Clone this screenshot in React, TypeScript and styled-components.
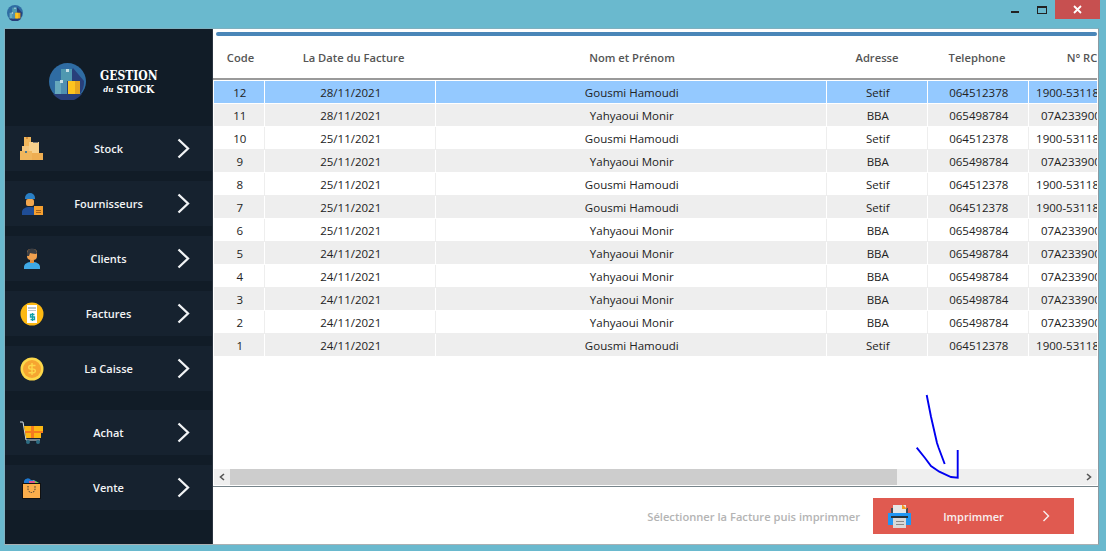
import React from "react";
import styled, { createGlobalStyle } from "styled-components";

const Global = createGlobalStyle`
  html, body { margin: 0; padding: 0; background: #6ab9ce; }
  body { font-family: "Open Sans", "Noto Sans", sans-serif; overflow: hidden; }
  * { box-sizing: border-box; }
`;

const Win = styled.div`
  position: relative;
  width: 1106px;
  height: 551px;
  background: #6ab9ce;
  display: flex;
  flex-direction: column;
  overflow: hidden;
`;
const TitleBar = styled.div`
  height: 28px;
  flex: none;
  display: flex;
  align-items: flex-start;
  padding: 5px 6px 0 7px;
`;
const Controls = styled.div`
  margin-left: auto;
  margin-top: -5px;
  display: flex;
  align-items: flex-start;
`;
const Ctl = styled.div<{ $w: number }>`
  width: ${(p) => p.$w}px;
  height: 19px;
  display: flex;
  align-items: center;
  justify-content: center;
`;
const CloseCtl = styled(Ctl)`
  background: #c75050;
`;
const Body = styled.div`
  flex: 1;
  display: flex;
  margin: 0 7px 6px 4px;
  border: 1px solid #7fb0bf;
  border-right-color: #8a9aa2;
  border-bottom-color: #a9b0b3;
  min-height: 0;
`;
const Sidebar = styled.nav`
  width: 208px;
  flex: none;
  background: #111c27;
  display: flex;
  flex-direction: column;
  border-right: 1px solid #2a3440;
`;
const Brand = styled.div`
  height: 97px;
  flex: none;
  display: flex;
  align-items: center;
  padding: 8px 0 0 44px;
  gap: 14px;
`;
const BrandText = styled.div`
  display: flex;
  flex-direction: column;
  align-items: center;
  color: #fff;
  font-family: "DejaVu Serif Condensed", "DejaVu Serif", "Liberation Serif", serif;
  font-stretch: condensed;
  font-weight: 700;
  line-height: 12.5px;
  margin-top: 2px;
`;
const BrandMain = styled.span`
  font-size: 12px;
  white-space: nowrap;
`;
const BrandStock = styled.span`
  font-size: 10.5px;
  white-space: nowrap;
  display: flex;
  align-items: center;
  gap: 3px;
`;
const BrandDu = styled.span`
  font-size: 8px;
  font-style: italic;
`;
const NavGroup = styled.div<{ $mt?: number }>`
  display: flex;
  flex-direction: column;
  gap: 10px;
  margin-top: ${(p) => p.$mt ?? 0}px;
`;
const NavRow = styled.div`
  height: 45px;
  background: #16222f;
  display: grid;
  grid-template-columns: 1fr auto 1fr;
  align-items: center;
  padding: 0 15px;
  color: #f2f4f5;
  font-size: 11px;
  font-weight: 600;
`;
const NavIcon = styled.svg`
  width: 24px;
  height: 24px;
  display: block;
`;
const Chevron = styled.svg`
  justify-self: end;
  margin-right: 7px;
  width: 13px;
  height: 21px;
  display: block;
`;
const Main = styled.main`
  flex: 1;
  min-width: 0;
  background: #fff;
  display: flex;
  flex-direction: column;
`;
const TopBar = styled.div`
  height: 4px;
  flex: none;
  margin: 3px 1px 0 3px;
  background: #4a86b8;
  border-radius: 2px;
`;
const Table = styled.div`
  flex: 1;
  min-height: 0;
  overflow: hidden;
  display: flex;
  flex-direction: column;
  padding-right: 1px;
`;
const Head = styled.div`
  height: 44px;
  flex: none;
  border-bottom: 2px solid #9a9a9a;
  display: grid;
  grid-template-columns: 53px 173px 384px 106px 94px 116px;
  padding-left: 1px;
  overflow: hidden;
`;
const HeadCell = styled.div`
  display: flex;
  align-items: center;
  justify-content: center;
  white-space: nowrap;
  font-size: 11.2px;
  font-weight: 600;
  color: #555;
`;
const Rows = styled.div`
  flex: 1;
  padding-top: 1px;
  min-height: 0;
`;
const Row = styled.div<{ $bg: string; $line: string }>`
  height: 23px;
  display: grid;
  grid-template-columns: 51px 171px 391px 101px 101px 110px;
  margin-left: 1px;
  overflow: hidden;
  background: ${(p) => p.$bg};
  color: #222;
  font-size: 11.5px;
  & > div { border-right: 1px solid ${(p) => p.$line}; border-bottom: 1px solid ${(p) => p.$line}; }
`;
const Cell = styled.div`
  display: flex;
  align-items: center;
  justify-content: center;
  white-space: nowrap;
  overflow: visible;
  padding-left: 1.5px;
  &:last-child { border-right: 0; padding-left: 0; }
`;
const HBar = styled.div`
  height: 16px;
  flex: none;
  margin: 0 1px 1px 1px;
  background: #efefef;
  display: flex;
  align-items: stretch;
`;
const HBtn = styled.div`
  width: 16px;
  flex: none;
  display: flex;
  align-items: center;
  justify-content: center;
`;
const HTrack = styled.div`
  flex: 1;
  display: flex;
`;
const HThumb = styled.div`
  width: 667px;
  background: #cdcdcd;
`;
const Footer = styled.footer`
  height: 58px;
  flex: none;
  border-top: 1px solid #77848a;
  display: flex;
  align-items: center;
  justify-content: flex-end;
  padding: 1px 24px 0 0;
  gap: 13px;
`;
const Hint = styled.span`
  color: #b4b4b4;
  font-size: 11.15px;
  font-weight: 600;
  white-space: nowrap;
`;
const PrintBtn = styled.button`
  width: 201px;
  height: 36px;
  border: 0;
  padding: 0 24px 0 15px;
  background: #e05a50;
  color: #f8f0ef;
  display: grid;
  grid-template-columns: 24px 1fr 8px;
  align-items: center;
  font-family: inherit;
  font-size: 11px;
  font-weight: 600;
`;
const PrintLabel = styled.span`
  padding-right: 7px;
`;
const Scribble = styled.svg`
  position: absolute;
  left: 910px;
  top: 390px;
  width: 55px;
  height: 95px;
  pointer-events: none;
`;

const data: [number, string, string, string, string, string][] = [];
const g = "Gousmi Hamoudi", y = "Yahyaoui Monir";
const rowsSrc: [number, string, boolean][] = [
  [12, "28/11/2021", true], [11, "28/11/2021", false], [10, "25/11/2021", true],
  [9, "25/11/2021", false], [8, "25/11/2021", true], [7, "25/11/2021", true],
  [6, "25/11/2021", false], [5, "24/11/2021", false], [4, "24/11/2021", false],
  [3, "24/11/2021", false], [2, "24/11/2021", false], [1, "24/11/2021", true],
];
rowsSrc.forEach(([c, d, isG]) =>
  data.push(isG
    ? [c, d, g, "Setif", "064512378", "1900-5311800000"]
    : [c, d, y, "BBA", "065498784", "07A2339000000"])
);

const StockIcon = () => (
  <NavIcon viewBox="0 0 24 24">
    <rect x="4" y="0" width="7" height="9" fill="#f0b65c" />
    <rect x="9" y="5" width="10" height="11" fill="#f6d08c" />
    <rect x="2" y="9" width="7" height="7" fill="#f3c67e" />
    <rect x="0" y="14" width="12" height="9" fill="#f0b65c" />
    <rect x="12" y="16" width="11" height="7" fill="#eeae52" />
    <rect x="6" y="0" width="2" height="2" fill="#d98f3a" />
    <rect x="5" y="14" width="2" height="2" fill="#4d7a90" />
    <rect x="13" y="5" width="5" height="1" fill="#777" />
  </NavIcon>
);
const WorkerIcon = () => (
  <NavIcon viewBox="0 0 24 24">
    <path d="M5 6a5 5 0 0 1 10 0v1H5z" fill="#2a7fc4" />
    <rect x="6" y="7" width="8" height="7" rx="2" fill="#f2a64e" />
    <path d="M2 23v-3c0-3 3-5 8-5s6 1 7 2v6z" fill="#1f4d96" />
    <rect x="14" y="14" width="9" height="9" fill="#f5a030" />
    <rect x="16" y="18" width="5" height="1" fill="#a5611a" />
    <rect x="16" y="20" width="5" height="1" fill="#a5611a" />
  </NavIcon>
);
const ClientIcon = () => (
  <NavIcon viewBox="0 0 24 24">
    <rect x="7" y="2" width="10" height="11" rx="4" fill="#f0a04e" />
    <path d="M7 7a5 5 0 0 1 10-1l-1 1c-3 0-5-1-6-1l-1 3H7z" fill="#3a3d42" />
    <path d="M4 22v-2c0-3 3-5 8-5s8 2 8 5v2z" fill="#3fa9e6" />
    <rect x="10" y="13" width="4" height="3" fill="#e08d3c" />
  </NavIcon>
);
const InvoiceIcon = () => (
  <NavIcon viewBox="0 0 24 24">
    <circle cx="12" cy="12" r="11.5" fill="#fdb913" />
    <rect x="7" y="3" width="10" height="18" fill="#fff" />
    <rect x="8" y="5" width="8" height="2" fill="#bcc6cc" />
    <rect x="8" y="8" width="8" height="1" fill="#bcc6cc" />
    <path d="M14.5 12.5h-4v2.5h4v2.5h-4M12.5 11v8" stroke="#11a0a8" strokeWidth="1.3" fill="none" />
  </NavIcon>
);
const CoinIcon = () => (
  <NavIcon viewBox="0 0 24 24">
    <circle cx="12" cy="12" r="11.5" fill="#fdd84a" />
    <circle cx="12" cy="12" r="9" fill="#f6a531" />
    <path d="M15.5 8.5H10.5a1.8 1.8 0 0 0 0 3.6h3a1.8 1.8 0 0 1 0 3.6H8.5M12 6v12" stroke="#fdd84a" strokeWidth="1.4" fill="none" />
  </NavIcon>
);
const CartIcon = () => (
  <NavIcon viewBox="0 0 24 24">
    <path d="M0 1h3l3 18h14" stroke="#d7e0e4" strokeWidth="1" fill="none" />
    <path d="M4 5h19v6l-2 1v5H6z" fill="#fdb913" />
    <rect x="11" y="5" width="3" height="12" fill="#f57c1f" />
    <rect x="5" y="10" width="18" height="2" fill="#f57c1f" />
    <circle cx="8" cy="21" r="2" fill="#2d6d84" />
    <circle cx="18" cy="21" r="2" fill="#2d6d84" />
  </NavIcon>
);
const BagIcon = () => (
  <NavIcon viewBox="0 0 24 24">
    <path d="M4 5a4 4 0 0 1 7-1l3 0 5 3v2H4z" fill="#1e78d0" />
    <path d="M13 4l6 3v2h-6z" fill="#8cc63f" />
    <rect x="9" y="5" width="6" height="3" fill="#e0558a" />
    <rect x="2.5" y="7.5" width="18" height="15" fill="#fbae4c" stroke="#111" strokeWidth="1" />
    <path d="M8 10v3a3.5 3.5 0 0 0 7 0v-3" fill="none" stroke="#333" strokeWidth="1" strokeDasharray="1.5 1" />
  </NavIcon>
);
const Chev = () => (
  <Chevron viewBox="0 0 13 21">
    <path d="M1.5 1.5 11 10.5 1.5 19.5" fill="none" stroke="#f2f4f5" strokeWidth="2.3" />
  </Chevron>
);

const nav1 = [
  ["Stock", StockIcon], ["Fournisseurs", WorkerIcon], ["Clients", ClientIcon],
  ["Factures", InvoiceIcon], ["La Caisse", CoinIcon],
] as const;
const nav2 = [["Achat", CartIcon], ["Vente", BagIcon]] as const;

const Nav = ({ label, Icon }: { label: string; Icon: React.FC }) => (
  <NavRow>
    <Icon />
    <span>{label}</span>
    <Chev />
  </NavRow>
);

const Logo = ({ size }: { size: number }) => (
  <svg width={size} height={size} viewBox="0 0 37 37" style={{ display: "block", flex: "none" }}>
    <circle cx="18.5" cy="18.5" r="18.5" fill="#2f6ca3" />
    <path d="M24 5 35 18a18.5 18.5 0 0 1-5 14H8l3-5z" fill="#283f7a" />
    <path d="M4 31a18.5 18.5 0 0 0 29 0z" fill="#283f7a" />
    <rect x="12" y="6" width="11" height="12" fill="#4f98b0" />
    <rect x="17" y="6" width="3" height="3" fill="#c5dfe6" />
    <rect x="6" y="18" width="12" height="13" fill="#67a9bd" />
    <rect x="12" y="18" width="6" height="13" fill="#4f8fb0" />
    <rect x="11" y="17" width="3" height="3" fill="#c5dfe6" />
    <rect x="19" y="18" width="12" height="13" fill="#e5a520" />
    <rect x="19" y="18" width="7" height="13" fill="#fdc41f" />
  </svg>
);

export default function App() {
  return (
    <Win>
      <Global />
      <TitleBar>
        <Logo size={16} />
        <Controls>
          <Ctl $w={29}>
            <svg width="8" height="8" viewBox="0 0 8 8"><rect y="5" width="8" height="2" fill="#222" /></svg>
          </Ctl>
          <Ctl $w={26}>
            <svg width="10" height="8" viewBox="0 0 10 8"><rect x="0.5" y="0.5" width="9" height="7" fill="none" stroke="#222" /><rect width="10" height="2" fill="#222" /></svg>
          </Ctl>
          <CloseCtl $w={45}>
            <svg width="9" height="9" viewBox="0 0 9 9"><path d="M1 1l7 7M8 1l-7 7" stroke="#fff" strokeWidth="1.8" /></svg>
          </CloseCtl>
        </Controls>
      </TitleBar>
      <Body>
        <Sidebar>
          <Brand>
            <Logo size={37} />
            <BrandText>
              <BrandMain>GESTION</BrandMain>
              <BrandStock><BrandDu>du</BrandDu>STOCK</BrandStock>
            </BrandText>
          </Brand>
          <NavGroup>
            {nav1.map(([l, I]) => <Nav key={l} label={l} Icon={I} />)}
          </NavGroup>
          <NavGroup $mt={19}>
            {nav2.map(([l, I]) => <Nav key={l} label={l} Icon={I} />)}
          </NavGroup>
        </Sidebar>
        <Main>
          <TopBar />
          <Table>
            <Head>
              {["Code", "La Date du Facture", "Nom et Prénom", "Adresse", "Telephone", "N° RC"].map((h) => (
                <HeadCell key={h}>{h}</HeadCell>
              ))}
            </Head>
            <Rows>
              {data.map((r, i) => {
                const sel = i === 0;
                const alt = i % 2 === 1;
                return (
                  <Row key={r[0]} $bg={sel ? "#94c9ff" : alt ? "#eeeeee" : "#ffffff"} $line={sel || alt ? "#ffffff" : "#eeeeee"}>
                    {r.map((c, j) => <Cell key={j}>{c}</Cell>)}
                  </Row>
                );
              })}
            </Rows>
          </Table>
          <HBar>
            <HBtn>
              <svg width="8" height="8" viewBox="0 0 8 8"><path d="M6 1 2.5 4 6 7" fill="none" stroke="#555" strokeWidth="1.6" /></svg>
            </HBtn>
            <HTrack><HThumb /></HTrack>
            <HBtn>
              <svg width="8" height="8" viewBox="0 0 8 8"><path d="M2 1 5.5 4 2 7" fill="none" stroke="#555" strokeWidth="1.6" /></svg>
            </HBtn>
          </HBar>
          <Footer>
            <Hint>Sélectionner la Facture puis imprimmer</Hint>
            <PrintBtn>
              <svg width="23" height="23" viewBox="0 0 23 23" style={{ display: "block" }}>
                <rect x="3" y="3" width="17" height="8" fill="#444c55" />
                <rect x="5" y="0" width="13" height="9" fill="#e6e6e6" />
                <path d="M14 0h1l4 4h-5z" fill="#f59a23" />
                <rect x="0" y="8" width="23" height="12" fill="#2196f3" />
                <rect x="3" y="11" width="17" height="2" fill="#26323a" />
                <rect x="5" y="13" width="13" height="10" fill="#d9d9d9" />
                <rect x="8" y="16" width="8" height="1" fill="#888" />
                <rect x="8" y="19" width="8" height="1" fill="#888" />
              </svg>
              <PrintLabel>Imprimmer</PrintLabel>
              <svg width="8" height="12" viewBox="0 0 8 12" style={{ display: "block" }}>
                <path d="M1.5 1 6.5 6 1.5 11" fill="none" stroke="#f8f0ef" strokeWidth="1.4" />
              </svg>
            </PrintBtn>
          </Footer>
        </Main>
      </Body>
      <Scribble viewBox="910 390 55 95">
        <path d="M926.7 395 931 416.7 937 443 938.7 448 944.7 464" fill="none" stroke="#0000f0" strokeWidth="1.9" />
        <path d="M916.7 447.7 925 458 931 466 939.3 471.7 951 477 957.7 477.7 957.7 450" fill="none" stroke="#0000f0" strokeWidth="1.9" />
      </Scribble>
    </Win>
  );
}
